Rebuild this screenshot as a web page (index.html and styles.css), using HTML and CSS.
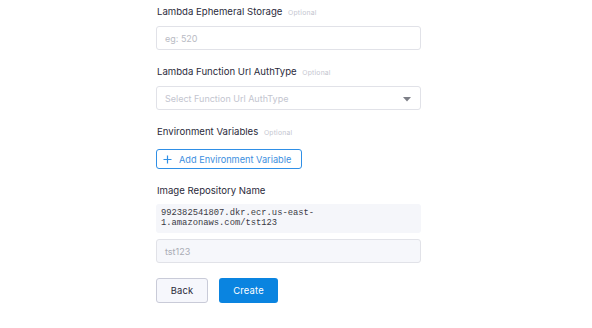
FILE: index.html
```html
<!DOCTYPE html>
<html>
<head>
<meta charset="utf-8">
<link rel="stylesheet" href="styles.css">
</head>
<body>
<div class="form">
  <div class="field">
    <div class="label">Lambda Ephemeral Storage <span class="opt">Optional</span></div>
    <div class="input"><span class="ph">eg: 520</span></div>
  </div>
  <div class="field">
    <div class="label">Lambda Function Url AuthType <span class="opt">Optional</span></div>
    <div class="input select"><span class="ph">Select Function Url AuthType</span>
      <svg class="caret" width="8" height="5" viewBox="0 0 8 5"><path d="M0 0 L8 0 L4 4.5 Z" fill="#7d7f87"/></svg>
    </div>
  </div>
  <div class="field">
    <div class="label">Environment Variables <span class="opt">Optional</span></div>
    <button class="add"><svg width="9" height="9" viewBox="0 0 9 9"><path d="M4.5 0.5 V8.5 M0.5 4.5 H8.5" stroke="#2f8fe6" stroke-width="1.2"/></svg>Add Environment Variable</button>
  </div>
  <div class="field">
    <div class="label">Image Repository Name</div>
    <div class="code">992382541807.dkr.ecr.us-east-<br>1.amazonaws.com/tst123</div>
    <div class="input disabled"><span class="ph">tst123</span></div>
  </div>
  <div class="actions">
    <button class="btn back">Back</button>
    <button class="btn create">Create</button>
  </div>
</div>
</body>
</html>
```
FILE: styles.css
```css
html, body { margin: 0; padding: 0; background: #fff; }
body { font-family: Inter, "Noto Sans", sans-serif; color: #2a2a3a; }
.form { width: 265px; margin-left: 156px; padding-top: 6px; display: flex; flex-direction: column; }
.field { display: flex; flex-direction: column; margin-bottom: 16px; }
.label { font-size: 9.6px; letter-spacing: 0; line-height: 12px; padding-left: 1px; margin-bottom: 7px; color: #2b2b3b; }
.opt { font-size: 6.8px; letter-spacing: 0.2px; color: #c4c6d0; margin-left: 3px; }
.input { height: 22px; border: 1px solid #e1e2e8; border-radius: 3px; display: flex; align-items: center; padding: 0 8px; position: relative; }
.ph { font-size: 9px; letter-spacing: 0; color: #b9bbc4; }
.select .ph { color: #c3c5cf; }
.caret { position: absolute; right: 9px; top: 10px; }
.add { align-self: flex-start; margin-top: 3px; height: 20px; width: 146px; border: 1px solid #2f8fe6; border-radius: 3px; background: #fff; color: #3d8fe0; font-family: inherit; font-size: 9.2px; letter-spacing: 0; display: flex; align-items: center; gap: 7px; padding: 0 6px; }
.code { background: #f5f6fa; border-radius: 3px; font-family: "Liberation Mono", monospace; font-size: 8.8px; line-height: 9.5px; color: #3a3a44; padding: 5px 5px 6px 5px; height: 18px; margin-bottom: 6px; }
.disabled { background: #f6f7fb; }
.disabled .ph { color: #a9abb4; }
.actions { display: flex; gap: 11px; margin-top: -1px; }
.btn { height: 25px; border-radius: 3px; font-family: inherit; font-size: 9.4px; letter-spacing: 0.2px; }
.back { width: 52px; background: #f6f7fc; border: 1px solid #c9cbd8; color: #2a2a3a; }
.create { width: 59px; background: #0a84e0; border: none; color: #fff; }
```
